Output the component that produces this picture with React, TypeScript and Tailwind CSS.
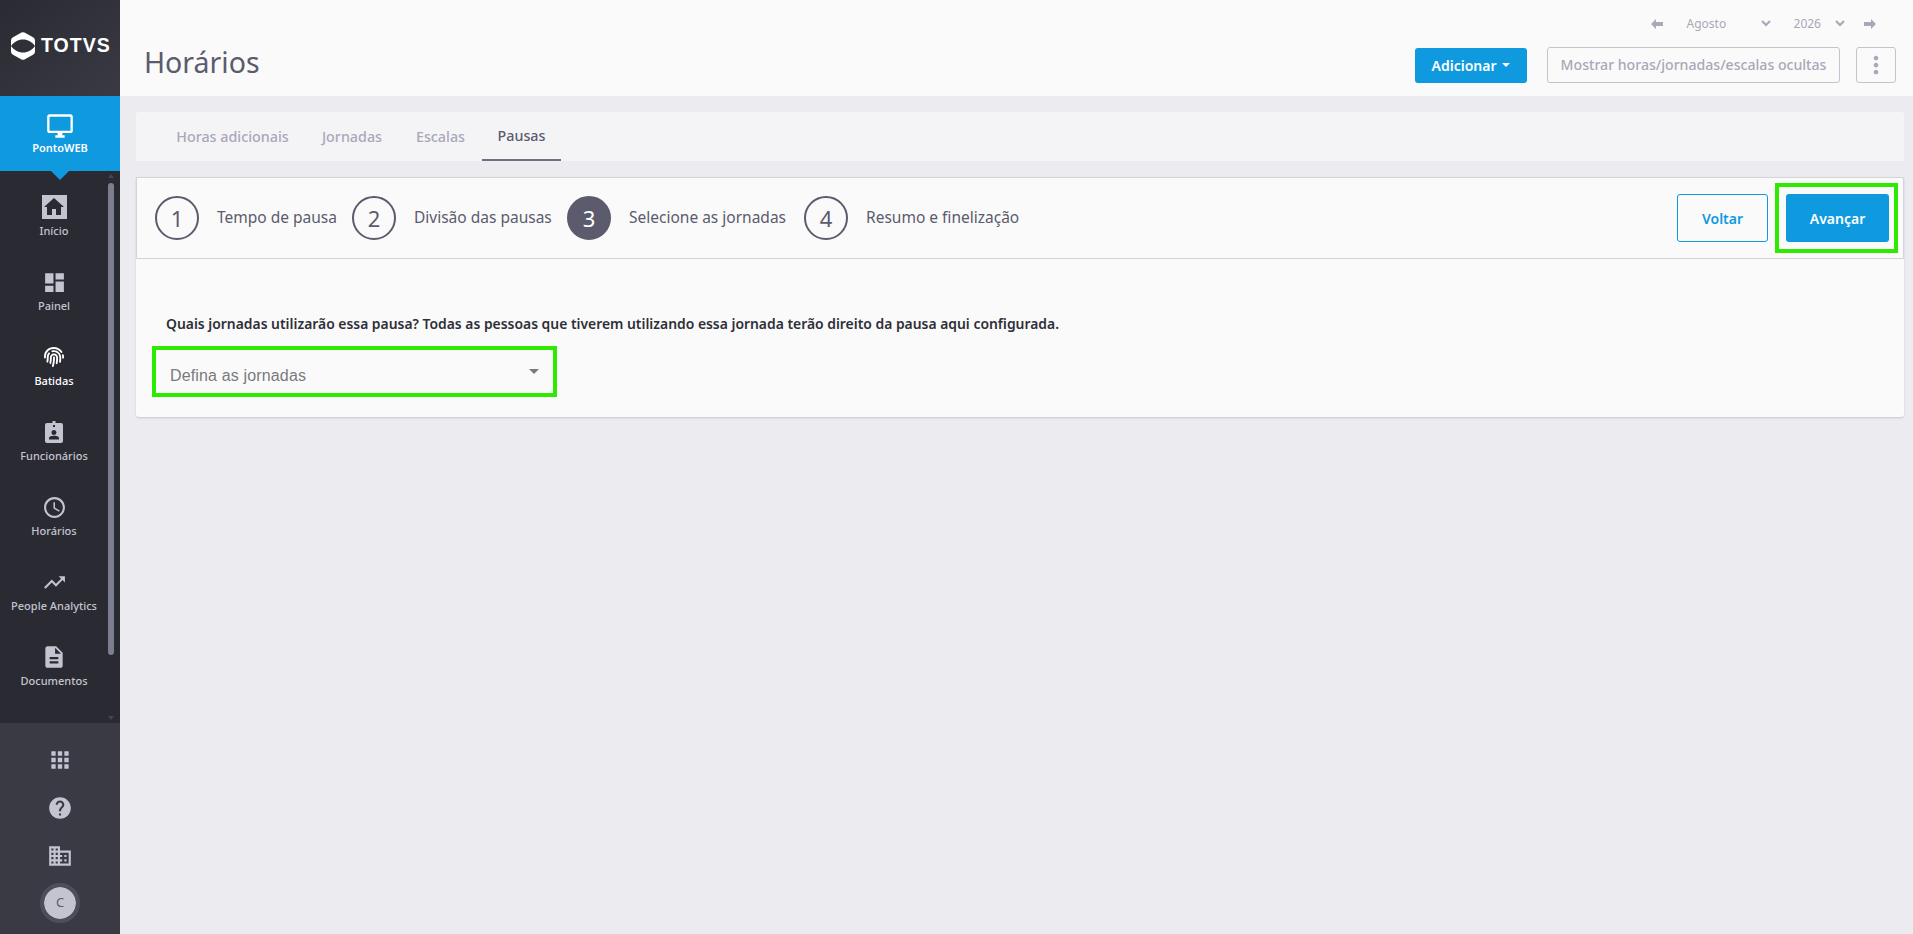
import React from 'react';
import {
  MdDashboard,
  MdAccessTime,
  MdTrendingUp,
  MdDescription,
  MdApps,
  MdHelp,
  MdDomain,
  MdOutlineDesktopWindows,
  MdHome,
  MdMoreVert,
} from 'react-icons/md';
import { FaFingerprint } from 'react-icons/fa';

const font = "font-['Noto_Sans',sans-serif]";

const BadgeIcon = () => (
  <svg width="18" height="22" viewBox="0 0 18 22" fill="currentColor">
    <path
      fillRule="evenodd"
      d="M2 2h5.500V0h3v2H16a2 2 0 0 1 2 2v16a2 2 0 0 1-2 2H2a2 2 0 0 1-2-2V4a2 2 0 0 1 2-2Zm6 2v2h2V4ZM9 9a2.500 2.500 0 1 0 0 5 2.500 2.500 0 0 0 0-5Zm-5 8v1.500h10V17c0-1.500-3-2.200-5-2.200S4 15.500 4 17Z"
    />
  </svg>
);

const navItems = [
  { label: 'Painel', icon: <MdDashboard size={25} /> },
  { label: 'Batidas', icon: <FaFingerprint size={20} />, active: true },
  { label: 'Funcionários', icon: <BadgeIcon /> },
  { label: 'Horários', icon: <MdAccessTime size={25} /> },
  { label: 'People Analytics', icon: <MdTrendingUp size={25} /> },
  { label: 'Documentos', icon: <MdDescription size={26} /> },
];

const tabs = [
  { label: 'Horas adicionais', width: 'w-[145px]' },
  { label: 'Jornadas', width: 'w-[94px]' },
  { label: 'Escalas', width: 'w-[83px]' },
  { label: 'Pausas', width: 'w-[79px]', active: true },
];

const steps = [
  { n: 1, label: 'Tempo de pausa', width: 'w-[197px]' },
  { n: 2, label: 'Divisão das pausas', width: 'w-[215px]' },
  { n: 3, label: 'Selecione as jornadas', width: 'w-[237px]', active: true },
  { n: 4, label: 'Resumo e finelização', width: 'w-[232px]' },
];

const Arrow = ({ flip }: { flip?: boolean }) => (
  <svg width="12" height="10" viewBox="0 0 12 10" fill="currentColor" className={flip ? 'rotate-180' : ''}>
    <path d="M0 5 5 0v3h7v4H5v3Z" />
  </svg>
);

const Chevron = () => (
  <svg width="10" height="7" viewBox="0 0 10 7" fill="none" stroke="currentColor" strokeWidth="2.2">
    <path d="M1 1l4 4 4-4" />
  </svg>
);

const Sidebar: React.FC = () => (
  <aside className="relative flex h-[934px] w-[120px] shrink-0 flex-col bg-[#2a2a33] text-[#c4c4d0]">
    <div className="flex h-[96px] items-center gap-[6px] bg-gradient-to-br from-[#2a2a33] to-[#3a3a44] pb-[5px] pl-[11px]">
      <svg width="24" height="28" viewBox="0 0 24 28">
        <path
          fill="#fff"
          fillRule="evenodd"
          d="M10.500.6a3 3 0 0 1 3 0l8.500 4.600a3.500 3.500 0 0 1 2 3V14c-3-4-7-6.500-12-6.500S3 10 0 14V8.200a3.500 3.500 0 0 1 2-3ZM0 14c3 4 7 6.500 12 6.500S21 18 24 14v5.800a3.500 3.500 0 0 1-2 3l-8.500 4.600a3 3 0 0 1-3 0L2 22.800a3.500 3.500 0 0 1-2-3Z"
        />
      </svg>
      <span className="font-['Liberation_Sans',sans-serif] text-[19.5px] font-bold tracking-[1px] text-white">TOTVS</span>
    </div>

    <div className="relative flex h-[75px] flex-col items-center bg-[#0f9adf] pt-[16px] text-white">
      <MdOutlineDesktopWindows size={28} />
      <span className={`${font} text-[11px] font-semibold`}>PontoWEB</span>
      <span className="absolute left-[51px] top-[75px] h-0 w-0 border-x-[9px] border-t-[9px] border-x-transparent border-t-[#0f9adf]" />
    </div>

    <nav className="flex h-[552px] flex-col pr-[12px] pt-[22px]">
      <div className="flex h-[75px] flex-col items-center pt-[2px]">
        <span className="flex h-[24px] w-[25px] items-center justify-center bg-[#c4c4d0] text-[#2a2a33]">
          <MdHome size={24} />
        </span>
        <span className={`${font} mt-[4px] text-[11px] font-medium`}>Início</span>
      </div>
      {navItems.map((item) => (
        <div key={item.label} className={`flex h-[75px] flex-col items-center ${item.active ? 'text-white' : ''}`}>
          <span className="flex h-[28px] items-center justify-center">{item.icon}</span>
          <span className={`${font} mt-[2px] whitespace-nowrap text-[11px] font-medium`}>{item.label}</span>
        </div>
      ))}
    </nav>

    {/* scrollbar */}
    <div className="absolute left-[108px] top-[183px] h-[472px] w-[6px] rounded-full bg-[#7d7d90]" />
    <span className="absolute left-[108px] top-[174px] h-0 w-0 border-x-[3px] border-b-[4px] border-x-transparent border-b-[#45454f]" />
    <span className="absolute left-[108px] top-[716px] h-0 w-0 border-x-[3px] border-t-[4px] border-x-transparent border-t-[#45454f]" />

    <div className="flex flex-1 flex-col items-center bg-[#3a3a44] pt-[24px]">
      <MdApps size={26} />
      <span className="mt-[22px]"><MdHelp size={26} /></span>
      <span className="mt-[22px]"><MdDomain size={26} /></span>
      <span className="mt-[14px] flex h-[40px] w-[40px] items-center justify-center rounded-full border-[4px] border-[#4e4e5b] bg-[#c4c4d0] bg-clip-padding">
        <span className={`${font} text-[13px] text-[#5b5b6d]`}>C</span>
      </span>
    </div>
  </aside>
);

const Header: React.FC = () => (
  <header className="flex h-[96px] flex-col bg-[#fafafa] pl-[24px] pr-[17px]">
    <div className={`${font} flex h-[47px] items-center justify-end pr-[20px] text-[12px] text-[#a8a8b8]`}>
      <Arrow />
      <span className="ml-[24px] w-[74px]">Agosto</span>
      <Chevron />
      <span className="ml-[23px]">2026</span>
      <span className="ml-[14px]"><Chevron /></span>
      <span className="ml-[19px]"><Arrow flip /></span>
    </div>
    <div className="flex items-start justify-between">
      <h1 className={`${font} -mt-[3px] text-[28.500px] leading-[36px] text-[#5b5b6d]`}>Horários</h1>
      <div className="flex items-center">
        <button className={`${font} flex h-[35px] w-[112px] items-center justify-center gap-[6px] rounded-[3px] bg-[#0f9adf] text-[14px] font-semibold text-white`}>
          Adicionar
          <span className="h-0 w-0 border-x-[4px] border-t-[4px] border-x-transparent border-t-white" />
        </button>
        <button className={`${font} ml-[20px] h-[36px] w-[293px] rounded-[3px] border border-[#c4c4d0] text-[14.100px] font-medium whitespace-nowrap text-[#a8a8b8]`}>
          Mostrar horas/jornadas/escalas ocultas
        </button>
        <button className="ml-[16px] flex h-[36px] w-[40px] items-center justify-center rounded-[3px] border border-[#c4c4d0] text-[#a8a8b8]">
          <MdMoreVert size={28} />
        </button>
      </div>
    </div>
  </header>
);

const Tabs: React.FC = () => (
  <div className={`${font} flex h-[49px] rounded-t-[3px] bg-[#f4f4f7] pl-[24px] text-[14.300px] font-medium`}>
    {tabs.map((tab) => (
      <div
        key={tab.label}
        className={`flex items-center justify-center whitespace-nowrap ${tab.width} ${
          tab.active ? 'border-b-[2px] border-[#6f6f83] text-[#5b5b6d]' : 'text-[#a8a8b8]'
        }`}
      >
        {tab.label}
      </div>
    ))}
  </div>
);

const Wizard: React.FC = () => (
  <section className="mt-[16px] rounded-b-[3px] bg-[#fafafa] shadow-[0_1px_2px_rgba(0,0,0,0.15)]">
    <div className="flex h-[82px] items-center justify-between border border-[#d4d4d8] pl-[18px] pr-[5px]">
      <div className="flex items-center">
        {steps.map((step) => (
          <div key={step.n} className={`flex shrink-0 items-center ${step.width}`}>
            <span
              className={`${font} flex h-[44px] w-[44px] items-center justify-center rounded-full border-[2px] border-[#5b5b6d] text-[22px] ${
                step.active ? 'bg-[#5b5b6d] text-white' : 'text-[#5b5b6d]'
              }`}
            >
              {step.n}
            </span>
            <span className={`${font} ml-[18px] whitespace-nowrap text-[15.500px] text-[#5b5b6d]`}>{step.label}</span>
          </div>
        ))}
      </div>
      <div className="flex items-center">
        <button className={`${font} h-[48px] w-[91px] rounded-[3px] border border-[#0f9adf] text-[14px] font-semibold text-[#0f9adf]`}>
          Voltar
        </button>
        <div className="ml-[7px] border-[4px] border-[#2eea00] py-[7px] pl-[7px] pr-[5px]">
          <button className={`${font} block h-[48px] w-[103px] rounded-[3px] bg-[#0f9adf] text-[14px] font-semibold text-white`}>
            Avançar
          </button>
        </div>
      </div>
    </div>
    <div className="h-[158px] pl-[16px] pt-[55px]">
      <p className={`${font} pl-[14px] text-[13.900px] font-semibold leading-[19px] text-[#2f2f38]`}>
        Quais jornadas utilizarão essa pausa? Todas as pessoas que tiverem utilizando essa jornada terão direito da pausa aqui configurada.
      </p>
      <div className="mt-[13px] flex h-[51px] w-[405px] items-center justify-between border-[4px] border-[#2eea00] pl-[14px] pr-[14px]">
        <span className="font-['Liberation_Sans',sans-serif] mt-[8px] text-[16px] tracking-[0.15px] text-[#7a7a7a]">Defina as jornadas</span>
        <span className="h-0 w-0 border-x-[5px] border-t-[5px] border-x-transparent border-t-[#7a7a7a]" />
      </div>
    </div>
  </section>
);

export default function App() {
  return (
    <div className="flex h-[934px] w-full overflow-hidden bg-[#ebebf0]">
      <Sidebar />
      <main className="flex min-w-0 flex-1 flex-col">
        <Header />
        <div className="pl-[16px] pr-[9px] pt-[16px]">
          <Tabs />
          <Wizard />
        </div>
      </main>
    </div>
  );
}
